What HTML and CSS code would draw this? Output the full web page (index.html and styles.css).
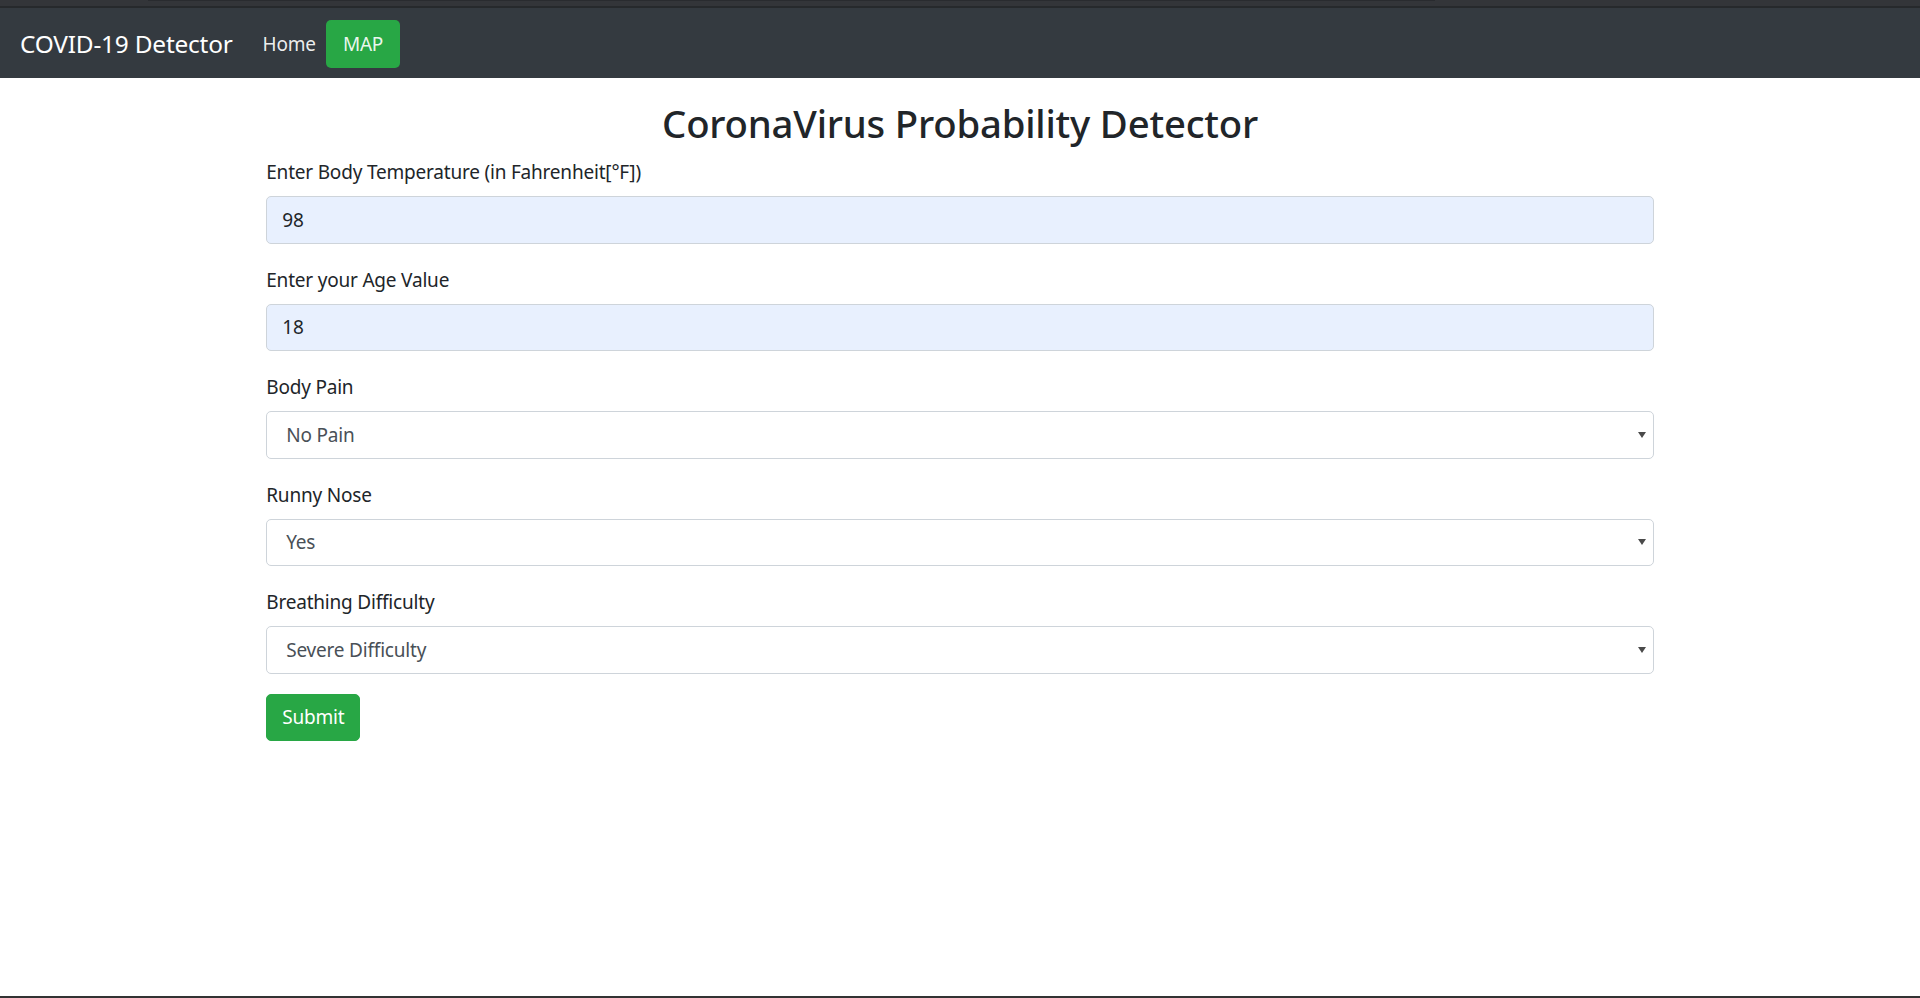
FILE: index.html
```html
<!DOCTYPE html>
<html lang="en">

<head>
    <meta charset="UTF-8">
    <meta name="viewport" content="width=device-width, initial-scale=1.0">
    <title>COVID-19 Detector</title>
    <link rel="stylesheet" href="styles.css">
</head>

<body>
    <div class="chrome-top">
        <div class="chrome-track"></div>
    </div>

    <nav class="navbar">
        <a class="brand" href="#">COVID-19 Detector</a>
        <a class="nav-link" href="#">Home</a>
        <a class="nav-link map-link" href="#">MAP</a>
    </nav>

    <div class="container">
        <h2 class="title">CoronaVirus Probability Detector</h2>
        <form class="detector-form">
            <div class="form-group">
                <label for="temp">Enter Body Temperature (in Fahrenheit[°F])</label>
                <input class="form-control filled" type="text" id="temp" value="98">
            </div>
            <div class="form-group">
                <label for="age">Enter your Age Value</label>
                <input class="form-control filled" type="text" id="age" value="18">
            </div>
            <div class="form-group">
                <label for="pain">Body Pain</label>
                <div class="select-wrap">
                    <select class="form-control" id="pain">
                        <option>No Pain</option>
                        <option>Mild Pain</option>
                        <option>Severe Pain</option>
                    </select>
                </div>
            </div>
            <div class="form-group">
                <label for="nose">Runny Nose</label>
                <div class="select-wrap">
                    <select class="form-control" id="nose">
                        <option>Yes</option>
                        <option>No</option>
                    </select>
                </div>
            </div>
            <div class="form-group">
                <label for="breath">Breathing Difficulty</label>
                <div class="select-wrap">
                    <select class="form-control" id="breath">
                        <option>Severe Difficulty</option>
                        <option>Mild Difficulty</option>
                        <option>No Difficulty</option>
                    </select>
                </div>
            </div>
            <button class="btn-submit" type="button">Submit</button>
        </form>
    </div>

    <div class="chrome-bottom"></div>
</body>

</html>
```

FILE: styles.css
```css
html,
body {
    margin: 0;
    height: 100%;
}

body {
    display: flex;
    flex-direction: column;
    background-color: #fff;
    font-family: "Noto Sans", "Open Sans", sans-serif;
    font-size: 19px;
    letter-spacing: -0.2px;
    color: #212529;
}

.chrome-top {
    height: 6px;
    background-color: #333539;
    border-bottom: 2px solid #26292c;
}

.chrome-track {
    margin-left: 148px;
    width: 1287px;
    height: 1px;
    background-color: #292b2f;
}

.navbar {
    display: flex;
    align-items: center;
    height: 70px;
    padding: 1px 20px 0;
    box-sizing: border-box;
    background-color: #343a40;
}

.brand {
    font-size: 24.4px;
    color: #fff;
    text-decoration: none;
    margin-right: 20px;
}

.nav-link {
    font-size: 19px;
    line-height: 30px;
    padding: 9px 10px;
    color: rgba(255, 255, 255, 0.92);
    text-decoration: none;
}

.map-link {
    padding: 9px 17px;
    background-color: #28a745;
    border-radius: 5px;
}

.container {
    width: 1387.5px;
    margin: 0 auto;
    padding-top: 21px;
}

.title {
    margin: 0 0 9px;
    font-size: 38.3px;
    font-weight: 500;
    line-height: 48px;
    text-align: center;
}

.form-group {
    margin-bottom: 20px;
}

.form-group label {
    display: block;
    padding-top: 1px;
    margin-bottom: 9px;
    line-height: 30px;
}

.form-control {
    display: block;
    width: 100%;
    height: 47.5px;
    padding: 7.5px 15px;
    box-sizing: border-box;
    border: 1px solid #ced4da;
    border-radius: 5px;
    background-color: #fff;
    font-family: inherit;
    font-size: 19px;
    letter-spacing: -0.2px;
    line-height: 30px;
    color: #495057;
    outline: none;
}

.form-control.filled {
    background-color: #e8f0fe;
    color: #212529;
}

select.form-control {
    appearance: none;
    -webkit-appearance: none;
    padding-left: 19px;
}

.select-wrap {
    position: relative;
}

.select-wrap::after {
    content: "";
    position: absolute;
    right: 8px;
    top: 50%;
    margin-top: -3px;
    border-left: 4px solid transparent;
    border-right: 4px solid transparent;
    border-top: 6px solid #4a4a4a;
    pointer-events: none;
}

.btn-submit {
    padding: 7.5px 15px;
    border: 1px solid #28a745;
    border-radius: 5px;
    background-color: #28a745;
    color: #fff;
    font-family: inherit;
    font-size: 19px;
    letter-spacing: -0.2px;
    line-height: 30px;
}

.chrome-bottom {
    margin-top: auto;
    height: 2px;
    background-color: #333;
}
```
